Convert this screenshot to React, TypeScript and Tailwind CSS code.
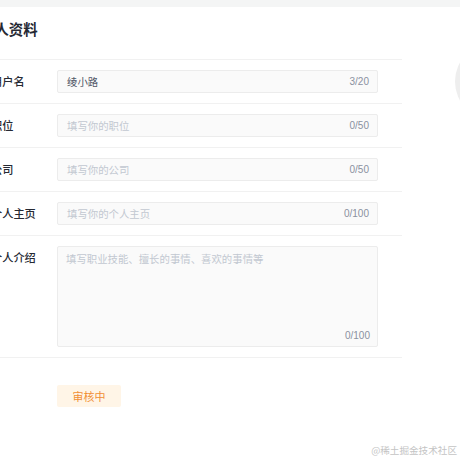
const font = { fontFamily: '"Noto Sans CJK SC", "Noto Sans", sans-serif' };

const rows = [
  { label: "用户名", value: "绫小路", placeholder: "", count: "3/20" },
  { label: "职位", value: "", placeholder: "填写你的职位", count: "0/50" },
  { label: "公司", value: "", placeholder: "填写你的公司", count: "0/50" },
  { label: "个人主页", value: "", placeholder: "填写你的个人主页", count: "0/100" },
];

function Row({ label, value, placeholder, count }: (typeof rows)[number]) {
  return (
    <div className="flex items-start border-b border-[#f1f1f1] py-[10px]">
      <div className="w-[77px] shrink-0 pl-[11px] text-[11.2px] font-medium leading-[23px] text-[#252933]">
        {label}
      </div>
      <div className="flex h-[23px] w-[321px] items-center justify-between rounded-[2px] border border-[#ececec] bg-[#fafafa] pl-[9px] pr-[8px] text-[10.4px]">
        {value ? (
          <span className="text-[#515767]">{value}</span>
        ) : (
          <span className="text-[#c2c8d1]">{placeholder}</span>
        )}
        <span className="font-['Liberation_Sans'] text-[10px] text-[#8a919f]">{count}</span>
      </div>
    </div>
  );
}

export default function App() {
  return (
    <div className="relative h-[460px] w-[460px] overflow-hidden bg-white" style={font}>
      <div className="h-[7px] bg-[#f4f5f5]" />
      <div className="flex">
        <div className="ml-[-20px] w-[422px] shrink-0">
          <div className="h-[53px] border-b border-[#f1f1f1] pt-[12px] text-[14.4px] font-bold leading-[20px] text-[#252933]">
            个人资料
          </div>
          {rows.map((r) => (
            <Row key={r.label} {...r} />
          ))}
          <div className="flex items-start border-b border-[#f1f1f1] py-[10px]">
            <div className="w-[77px] shrink-0 pl-[11px] text-[11.2px] font-medium leading-[23px] text-[#252933]">
              个人介绍
            </div>
            <div className="relative h-[101px] w-[321px] rounded-[2px] border border-[#ececec] bg-[#fafafa] px-[8px] pt-[4px] text-[10.4px] leading-[16px] text-[#c2c8d1]">
              填写职业技能、擅长的事情、喜欢的事情等
              <span className="absolute bottom-[2px] right-[7px] font-['Liberation_Sans'] text-[10px] text-[#8a919f]">
                0/100
              </span>
            </div>
          </div>
          <div className="ml-[77px] mt-[27px] flex h-[22px] w-[64px] items-center justify-center rounded-[2px] bg-[#fff5e7] text-[11px] text-[#f18f35]">
            审核中
          </div>
        </div>
        <div className="ml-[53px] mt-[36px] h-[77px] w-[77px] shrink-0 rounded-full bg-[#eeeeee]" />
      </div>
      <div className="absolute bottom-[3px] right-[3px] text-[9.6px] text-[#c4c4c4]">@稀土掘金技术社区</div>
    </div>
  );
}
